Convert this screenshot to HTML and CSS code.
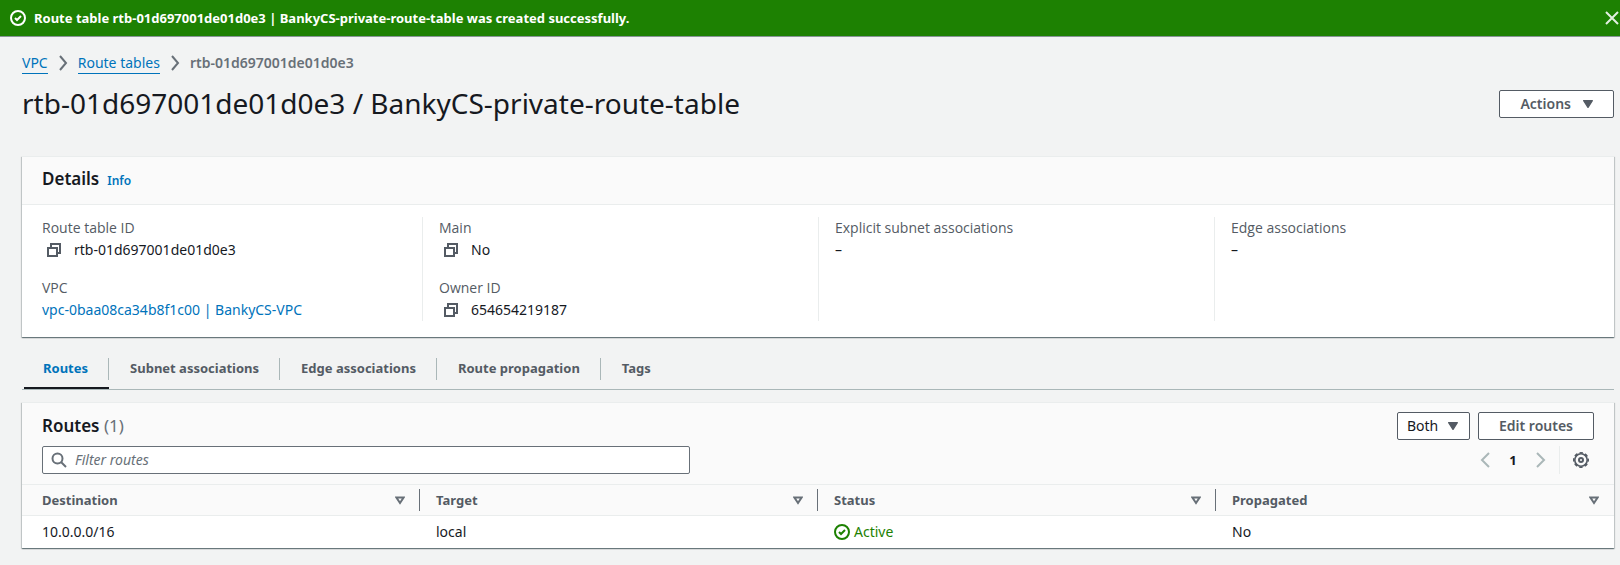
FILE: index.html
```html
<!DOCTYPE html>
<html lang="en">
<head>
<meta charset="utf-8">
<meta name="viewport" content="width=device-width, initial-scale=1">
<title>rtb-01d697001de01d0e3 | Route tables</title>
<link rel="stylesheet" href="styles.css">
</head>
<body>
<svg class="defs" aria-hidden="true">
  <symbol id="copy" viewBox="0 0 16 16"><path d="M2 6h9v8H2zM5 6V2h9v9h-3" fill="none" stroke="currentColor" stroke-width="2"/></symbol>
  <symbol id="check" viewBox="0 0 16 16"><circle cx="8" cy="8" r="7" fill="none" stroke="currentColor" stroke-width="2"/><path d="M5 8l2 2 4-4" fill="none" stroke="currentColor" stroke-width="2"/></symbol>
  <symbol id="sep" viewBox="0 0 10 16"><path d="M2 1l6 7-6 7" fill="none" stroke="currentColor" stroke-width="2"/></symbol>
  <symbol id="down" viewBox="0 0 10 8"><path d="M.7 .7h8.6L5 7.3z" fill="currentColor" stroke="currentColor" stroke-width="1.4" stroke-linejoin="round"/></symbol>
  <symbol id="sort" viewBox="0 0 10 9"><path d="M1.4 1.5h7.2L5 7z" fill="none" stroke="currentColor" stroke-width="2"/></symbol>
</svg>

<div class="flash" role="status">
  <svg class="icon16"><use href="#check"/></svg>
  <span class="flash-text">Route table rtb-01d697001de01d0e3 | BankyCS-private-route-table was created successfully.</span>
  <button class="flash-close" type="button" aria-label="Dismiss"><svg class="icon16" viewBox="0 0 16 16"><path d="M2 2l12 12M14 2L2 14" fill="none" stroke="currentColor" stroke-width="2"/></svg></button>
</div>

<main class="page">
  <nav class="crumbs" aria-label="Breadcrumbs">
    <a href="#vpc">VPC</a>
    <svg class="crumb-sep"><use href="#sep"/></svg>
    <a href="#route-tables">Route tables</a>
    <svg class="crumb-sep"><use href="#sep"/></svg>
    <span class="crumb-current">rtb-01d697001de01d0e3</span>
  </nav>

  <header class="title-row">
    <h1>rtb-01d697001de01d0e3 / BankyCS-private-route-table</h1>
    <button class="btn" type="button">Actions <svg class="caret"><use href="#down"/></svg></button>
  </header>

  <section class="card details">
    <div class="card-head"><h2>Details</h2><a class="info" href="#info">Info</a></div>
    <div class="columns">
      <dl>
        <div><dt>Route table ID</dt><dd><button class="copy" type="button" aria-label="Copy route table ID"><svg class="icon16"><use href="#copy"/></svg></button>rtb-01d697001de01d0e3</dd></div>
        <div><dt>VPC</dt><dd><a href="#vpc-detail">vpc-0baa08ca34b8f1c00 | BankyCS-VPC</a></dd></div>
      </dl>
      <dl>
        <div><dt>Main</dt><dd><button class="copy" type="button" aria-label="Copy main"><svg class="icon16"><use href="#copy"/></svg></button>No</dd></div>
        <div><dt>Owner ID</dt><dd><button class="copy" type="button" aria-label="Copy owner ID"><svg class="icon16"><use href="#copy"/></svg></button>654654219187</dd></div>
      </dl>
      <dl><div><dt>Explicit subnet associations</dt><dd>–</dd></div></dl>
      <dl><div><dt>Edge associations</dt><dd>–</dd></div></dl>
    </div>
  </section>

  <div class="tabs" role="tablist">
    <button class="tab active" type="button" role="tab" aria-selected="true">Routes</button>
    <button class="tab" type="button" role="tab" aria-selected="false">Subnet associations</button>
    <button class="tab" type="button" role="tab" aria-selected="false">Edge associations</button>
    <button class="tab" type="button" role="tab" aria-selected="false">Route propagation</button>
    <button class="tab" type="button" role="tab" aria-selected="false">Tags</button>
  </div>

  <section class="card">
    <div class="tools">
      <div class="tools-row">
        <h2>Routes <span class="count">(1)</span></h2>
        <div class="actions">
          <div class="select">
            <select aria-label="Route filter"><option>Both</option></select>
            <svg class="caret"><use href="#down"/></svg>
          </div>
          <button class="btn" type="button">Edit routes</button>
        </div>
      </div>
      <div class="tools-row">
        <label class="search">
          <svg class="icon16" viewBox="0 0 16 16"><circle cx="6.5" cy="6.5" r="5" fill="none" stroke="currentColor" stroke-width="2"/><path d="M10 10l5 5" stroke="currentColor" stroke-width="2"/></svg>
          <input type="text" placeholder="Filter routes" aria-label="Filter routes">
        </label>
        <div class="pager">
          <button class="page-arrow" type="button" aria-label="Previous page"><svg class="icon16" viewBox="0 0 16 16"><path d="M12 1L5 8l7 7" fill="none" stroke="currentColor" stroke-width="2"/></svg></button>
          <button class="page-num" type="button">1</button>
          <button class="page-arrow" type="button" aria-label="Next page"><svg class="icon16" viewBox="0 0 16 16"><path d="M4 1l7 7-7 7" fill="none" stroke="currentColor" stroke-width="2"/></svg></button>
          <button class="gear" type="button" aria-label="Preferences"><svg class="icon16" viewBox="0 0 16 16"><circle cx="8" cy="8" r="6.2" fill="none" stroke="currentColor" stroke-width="1.6"/><circle cx="8" cy="8" r="7.2" fill="none" stroke="currentColor" stroke-width="1.6" stroke-dasharray="3.4 2.255" stroke-dashoffset="1.7"/><circle cx="8" cy="8" r="2" fill="none" stroke="currentColor" stroke-width="2"/></svg></button>
        </div>
      </div>
    </div>
    <table>
      <thead><tr>
        <th><div class="th">Destination<svg class="sort"><use href="#sort"/></svg></div></th>
        <th><div class="th">Target<svg class="sort"><use href="#sort"/></svg></div></th>
        <th><div class="th">Status<svg class="sort"><use href="#sort"/></svg></div></th>
        <th><div class="th">Propagated<svg class="sort"><use href="#sort"/></svg></div></th>
      </tr></thead>
      <tbody><tr>
        <td>10.0.0.0/16</td>
        <td>local</td>
        <td><span class="status"><svg class="icon16"><use href="#check"/></svg>Active</span></td>
        <td>No</td>
      </tr></tbody>
    </table>
  </section>
</main>
</body>
</html>
```

FILE: styles.css
```css
* { box-sizing: border-box; }
body {
  margin: 0;
  background: #f2f3f3;
  color: #16191f;
  font: 14px/22px "Noto Sans", "Open Sans", sans-serif;
}
h1, h2, dl, dd { margin: 0; }
button, input, select { font: inherit; color: inherit; }
button { background: none; border: 0; padding: 0; cursor: pointer; }
a { color: #0073bb; text-decoration: none; }
svg { display: block; flex: none; }
.defs { position: absolute; width: 0; height: 0; }
.icon16 { width: 16px; height: 16px; }

.flash {
  display: flex;
  align-items: center;
  gap: 8px;
  height: 37px;
  padding-left: 10px;
  background: #1d8102;
  border-bottom: 1px solid #879596;
  color: #fff;
  font-size: 13px;
  font-weight: 700;
}
.flash-text { flex: 1; }
.flash-close { color: #e3efe0; }

.page { padding: 15px 6px 16px 22px; }
.crumbs { display: flex; align-items: center; gap: 10px; }
.crumbs a { line-height: 20px; border-bottom: 1px solid #0073bb; }
.crumb-sep { width: 10px; height: 16px; color: #687078; }
.crumb-current { color: #687078; font-weight: 600; }

.title-row { display: flex; align-items: flex-start; justify-content: space-between; padding: 11px 0 35px; }
h1 { font-size: 28px; font-weight: 400; line-height: 36px; }
.btn {
  display: flex;
  align-items: center;
  gap: 12px;
  height: 28px;
  padding: 0 20px;
  border: 1px solid #545b64;
  border-radius: 2px;
  background: #fff;
  color: #545b64;
  font-weight: 600;
}
.title-row .btn { margin-top: 5px; }
.caret { width: 10px; height: 8px; color: #545b64; }

.card {
  background: #fff;
  border-top: 1px solid #eaeded;
  box-shadow: 0 1px 1px 0 rgba(0, 28, 36, .4), 1px 1px 1px 0 rgba(0, 28, 36, .15), -1px 1px 1px 0 rgba(0, 28, 36, .15);
}
.card-head {
  display: flex;
  align-items: baseline;
  gap: 8px;
  padding: 11px 20px 12px;
  background: #fafafa;
  border-bottom: 1px solid #eaeded;
}
h2 { font-size: 17px; font-weight: 600; line-height: 22px; }
.info { font-size: 12px; font-weight: 600; }

.columns { display: grid; grid-template-columns: repeat(4, 1fr); padding: 12px 4px 16px; }
.columns dl { display: grid; align-content: start; gap: 16px; padding-left: 16px; }
.columns dl + dl { border-left: 1px solid #eaeded; }
dt { color: #545b64; font-family: "Open Sans", "Noto Sans", sans-serif; }
dd { display: flex; align-items: center; }
.copy { margin: 0 12px 0 4px; color: #545b64; }

.tabs { display: flex; margin: 9px 0 12px; padding: 0 2px; border-bottom: 1px solid #aab7b8; }
.tab {
  position: relative;
  height: 43px;
  padding: 0 21px;
  color: #545b64;
  font-size: 13px;
  font-weight: 700;
}
.tab:first-child { padding-left: 19px; }
.tab:not(:last-child)::after {
  content: "";
  position: absolute;
  top: 12px;
  right: 0;
  width: 1px;
  height: 22px;
  background: #aab7b8;
}
.tab.active { color: #0073bb; box-shadow: inset 0 -2px #16191f; }

.tools { display: grid; gap: 6px; padding: 9px 20px 10px; background: #fafafa; border-bottom: 1px solid #eaeded; }
.tools-row { display: flex; align-items: center; justify-content: space-between; }
.count { color: #687078; font-weight: 400; }
.actions { display: flex; gap: 8px; }
.select { position: relative; }
.select select {
  appearance: none;
  width: 73px;
  height: 28px;
  padding: 0 9px;
  border: 1px solid #545b64;
  border-radius: 2px;
  background: #fff;
}
.select .caret { position: absolute; top: 10px; right: 12px; pointer-events: none; }
.search {
  display: flex;
  align-items: center;
  gap: 8px;
  width: 648px;
  height: 28px;
  padding: 0 8px;
  border: 1px solid #687078;
  border-radius: 2px;
  background: #fff;
  color: #687078;
}
.search input { flex: 1; min-width: 0; padding: 0; border: 0; outline: 0; background: none; }
.search input::placeholder { color: #687078; font-style: italic; opacity: 1; }
.pager { display: flex; align-items: center; height: 28px; }
.page-arrow { color: #aab7b8; }
.page-num { width: 40px; font-size: 13px; font-weight: 700; }
.gear { display: flex; align-items: center; height: 28px; margin-left: 10px; padding: 0 5px 0 13px; border-left: 1px solid #eaeded; color: #545b64; }

table { width: 100%; border-collapse: separate; border-spacing: 0; table-layout: fixed; }
th { padding: 4px 0; background: #fafafa; border-bottom: 1px solid #eaeded; text-align: left; }
.th {
  display: flex;
  align-items: center;
  justify-content: space-between;
  height: 22px;
  padding: 0 14px 0 16px;
  color: #545b64;
  font-size: 13px;
  font-weight: 700;
}
th:not(:last-child) .th { border-right: 1px solid #687078; }
th:last-child .th { padding-right: 15px; }
.sort { width: 10px; height: 9px; color: #687078; }
td { padding: 5px 16px; }
th:first-child .th, td:first-child { padding-left: 20px; }
.status { display: flex; align-items: center; gap: 4px; color: #1d8102; }
```
